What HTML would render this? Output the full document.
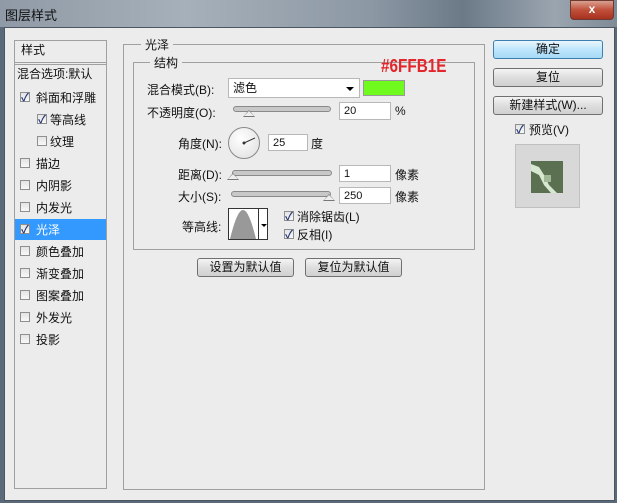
<!DOCTYPE html>
<html><head><meta charset="utf-8"><style>
body{margin:0;width:617px;height:503px;overflow:hidden;background:#5a6a78;font-family:"Liberation Sans","Noto Sans CJK SC",sans-serif;font-size:12px;color:#111;position:relative}
.a{position:absolute}
.title{left:0;top:0;width:617px;height:27px;background:linear-gradient(90deg,#8f9aa6,#a6b0ba 30%,#8c98a4 60%,#6c7a88 75%,#9aa5b0 90%,#7e8a96)}
.dlg{left:4px;top:27px;width:609px;height:472px;background:#ececec;border:1px solid #4c5660}
.box{position:absolute;border:1px solid #a0a0a0}
.cb{position:absolute;width:10px;height:10px;border:1px solid #8e8f8f;background:linear-gradient(#e4e4e4,#f8f8f8);box-sizing:border-box}
.cb.on::after{content:"✓";position:absolute;left:0px;top:-4px;font-size:11px;color:#2a3a7a;font-weight:bold}
.btn{position:absolute;height:17px;border:1px solid #707070;border-radius:3px;background:linear-gradient(#f4f4f4,#dedede 50%,#d0d0d0);text-align:center;line-height:17px;font-size:12px;white-space:nowrap}
.inp{position:absolute;background:#fff;border:1px solid #b8b8b8;box-sizing:border-box;font-size:11px;padding-left:4px;line-height:16px}
.track{position:absolute;height:4px;border:1px solid #8a8a8a;border-radius:3px;background:#c8c8c8}
.thumb{position:absolute;width:0;height:0;border-left:6px solid transparent;border-right:6px solid transparent;border-bottom:7px solid #777}
.thumb::after{content:"";position:absolute;left:-5px;top:1px;border-left:5px solid transparent;border-right:5px solid transparent;border-bottom:5px solid #eee}
.lbl{position:absolute;font-size:12px;white-space:nowrap}
</style></head><body>
<div class="a title"></div>
<div class="a" style="left:5px;top:5px;font-size:13px;color:#111">图层样式</div>
<div class="a" style="left:570px;top:0;width:42px;height:18px;background:linear-gradient(#d9a090,#c0503a 50%,#a83020);border:1px solid #6b3a30;border-radius:0 0 4px 4px;color:#fff;text-align:center;font-weight:bold;line-height:17px">x</div>
<div class="a dlg"></div>

<div class="box" style="left:14px;top:40px;width:91px;height:447px;background:#ececec"></div>
<div class="a" style="left:15px;top:62px;width:91px;border-top:1px solid #a0a0a0;border-bottom:1px solid #a0a0a0;height:1px"></div>
<div class="lbl" style="left:21px;top:41px">样式</div>
<div class="lbl" style="left:17px;top:65px">混合选项:默认</div>
<div class="a" style="left:15px;top:219px;width:91px;height:21px;background:#3399ff"></div>
<div class="cb on" style="left:20px;top:92px"></div><div class="lbl" style="left:36px;top:89px">斜面和浮雕</div>
<div class="cb on" style="left:37px;top:114px"></div><div class="lbl" style="left:50px;top:111px">等高线</div>
<div class="cb" style="left:37px;top:136px"></div><div class="lbl" style="left:50px;top:133px">纹理</div>
<div class="cb" style="left:20px;top:158px"></div><div class="lbl" style="left:36px;top:155px">描边</div>
<div class="cb" style="left:20px;top:180px"></div><div class="lbl" style="left:36px;top:177px">内阴影</div>
<div class="cb" style="left:20px;top:202px"></div><div class="lbl" style="left:36px;top:199px">内发光</div>
<div class="cb on" style="left:20px;top:224px"></div><div class="lbl" style="left:36px;top:221px;color:#fff">光泽</div>
<div class="cb" style="left:20px;top:246px"></div><div class="lbl" style="left:36px;top:243px">颜色叠加</div>
<div class="cb" style="left:20px;top:268px"></div><div class="lbl" style="left:36px;top:265px">渐变叠加</div>
<div class="cb" style="left:20px;top:290px"></div><div class="lbl" style="left:36px;top:287px">图案叠加</div>
<div class="cb" style="left:20px;top:312px"></div><div class="lbl" style="left:36px;top:309px">外发光</div>
<div class="cb" style="left:20px;top:334px"></div><div class="lbl" style="left:36px;top:331px">投影</div>

<div class="box" style="left:123px;top:44px;width:360px;height:444px"></div>
<div class="lbl" style="left:141px;top:36px;background:#ececec;padding:0 4px">光泽</div>
<div class="box" style="left:133px;top:62px;width:340px;height:186px"></div>
<div class="lbl" style="left:150px;top:54px;background:#ececec;padding:0 4px">结构</div>
<div class="a" style="left:381px;top:56px;color:#e3262b;font-family:'Liberation Sans Narrow','Liberation Sans',sans-serif;font-weight:bold;font-size:18px;transform:scaleX(0.85);transform-origin:left">#6FFB1E</div>

<div class="lbl" style="left:147px;top:81px">混合模式(B):</div>
<div class="inp" style="left:228px;top:78px;width:132px;height:20px;line-height:18px;font-size:12px">滤色</div>
<div class="a" style="left:346px;top:87px;border-left:4px solid transparent;border-right:4px solid transparent;border-top:4px solid #000"></div>
<div class="a" style="left:363px;top:80px;width:42px;height:16px;background:#6ffb1e;border:1px solid #999;box-sizing:border-box"></div>

<div class="lbl" style="left:147px;top:104px">不透明度(O):</div>
<div class="track" style="left:233px;top:106px;width:96px"></div>
<div class="thumb" style="left:243px;top:110px"></div>
<div class="inp" style="left:339px;top:102px;width:52px;height:18px">20</div>
<div class="lbl" style="left:395px;top:104px">%</div>

<div class="lbl" style="left:178px;top:135px">角度(N):</div>
<div class="a" style="left:228px;top:127px;width:32px;height:32px;border-radius:50%;border:1px solid #888;background:radial-gradient(circle at 40% 35%,#fff,#ddd);box-sizing:border-box"></div>
<svg class="a" style="left:228px;top:127px" width="32" height="32"><line x1="16" y1="16" x2="27" y2="11" stroke="#333" stroke-width="1"/><circle cx="16" cy="16" r="1.5" fill="#333"/></svg>
<div class="inp" style="left:268px;top:134px;width:40px;height:17px">25</div>
<div class="lbl" style="left:311px;top:135px">度</div>

<div class="lbl" style="left:178px;top:166px">距离(D):</div>
<div class="track" style="left:232px;top:170px;width:98px"></div>
<div class="thumb" style="left:227px;top:173px"></div>
<div class="inp" style="left:339px;top:165px;width:52px;height:17px">1</div>
<div class="lbl" style="left:395px;top:166px">像素</div>

<div class="lbl" style="left:178px;top:188px">大小(S):</div>
<div class="track" style="left:231px;top:191px;width:98px"></div>
<div class="thumb" style="left:323px;top:194px"></div>
<div class="inp" style="left:339px;top:187px;width:52px;height:17px">250</div>
<div class="lbl" style="left:395px;top:188px">像素</div>

<div class="lbl" style="left:182px;top:218px">等高线:</div>
<div class="a" style="left:228px;top:208px;width:40px;height:32px;background:#fff;border:1px solid #333;box-sizing:border-box"></div>
<svg class="a" style="left:229px;top:209px" width="30" height="30"><path d="M1 30 C6 10 10 1 14 1 C18 1 22 10 27 30 Z" fill="#999"/></svg>
<div class="a" style="left:258px;top:208px;width:1px;height:32px;background:#333"></div>
<div class="a" style="left:261px;top:224px;border-left:3px solid transparent;border-right:3px solid transparent;border-top:3px solid #000"></div>
<div class="cb on" style="left:284px;top:211px"></div><div class="lbl" style="left:297px;top:208px">消除锯齿(L)</div>
<div class="cb on" style="left:284px;top:229px"></div><div class="lbl" style="left:297px;top:226px">反相(I)</div>

<div class="btn" style="left:197px;top:258px;width:95px">设置为默认值</div>
<div class="btn" style="left:305px;top:258px;width:95px">复位为默认值</div>

<div class="btn" style="left:493px;top:40px;width:108px;border-color:#3c7fb1;background:linear-gradient(#eaf6fd,#bee6fd 50%,#a7d9f5)">确定</div>
<div class="btn" style="left:493px;top:68px;width:108px">复位</div>
<div class="btn" style="left:493px;top:96px;width:108px">新建样式(W)...</div>
<div class="cb on" style="left:515px;top:124px"></div><div class="lbl" style="left:529px;top:121px">预览(V)</div>
<div class="a" style="left:515px;top:144px;width:65px;height:64px;background:#d8d8d8;border:1px solid #c0c0c0;box-sizing:border-box"></div>
<svg class="a" style="left:531px;top:161px" width="32" height="32"><rect width="32" height="32" fill="#5a7050"/><path d="M0 3 L8 6 L13 14 L18 24 L26 32 L20 32 L13 24 L8 14 L0 10 Z" fill="#d8e8d0"/><rect x="13" y="14" width="7" height="7" fill="#a0b898"/></svg>
</body></html>
